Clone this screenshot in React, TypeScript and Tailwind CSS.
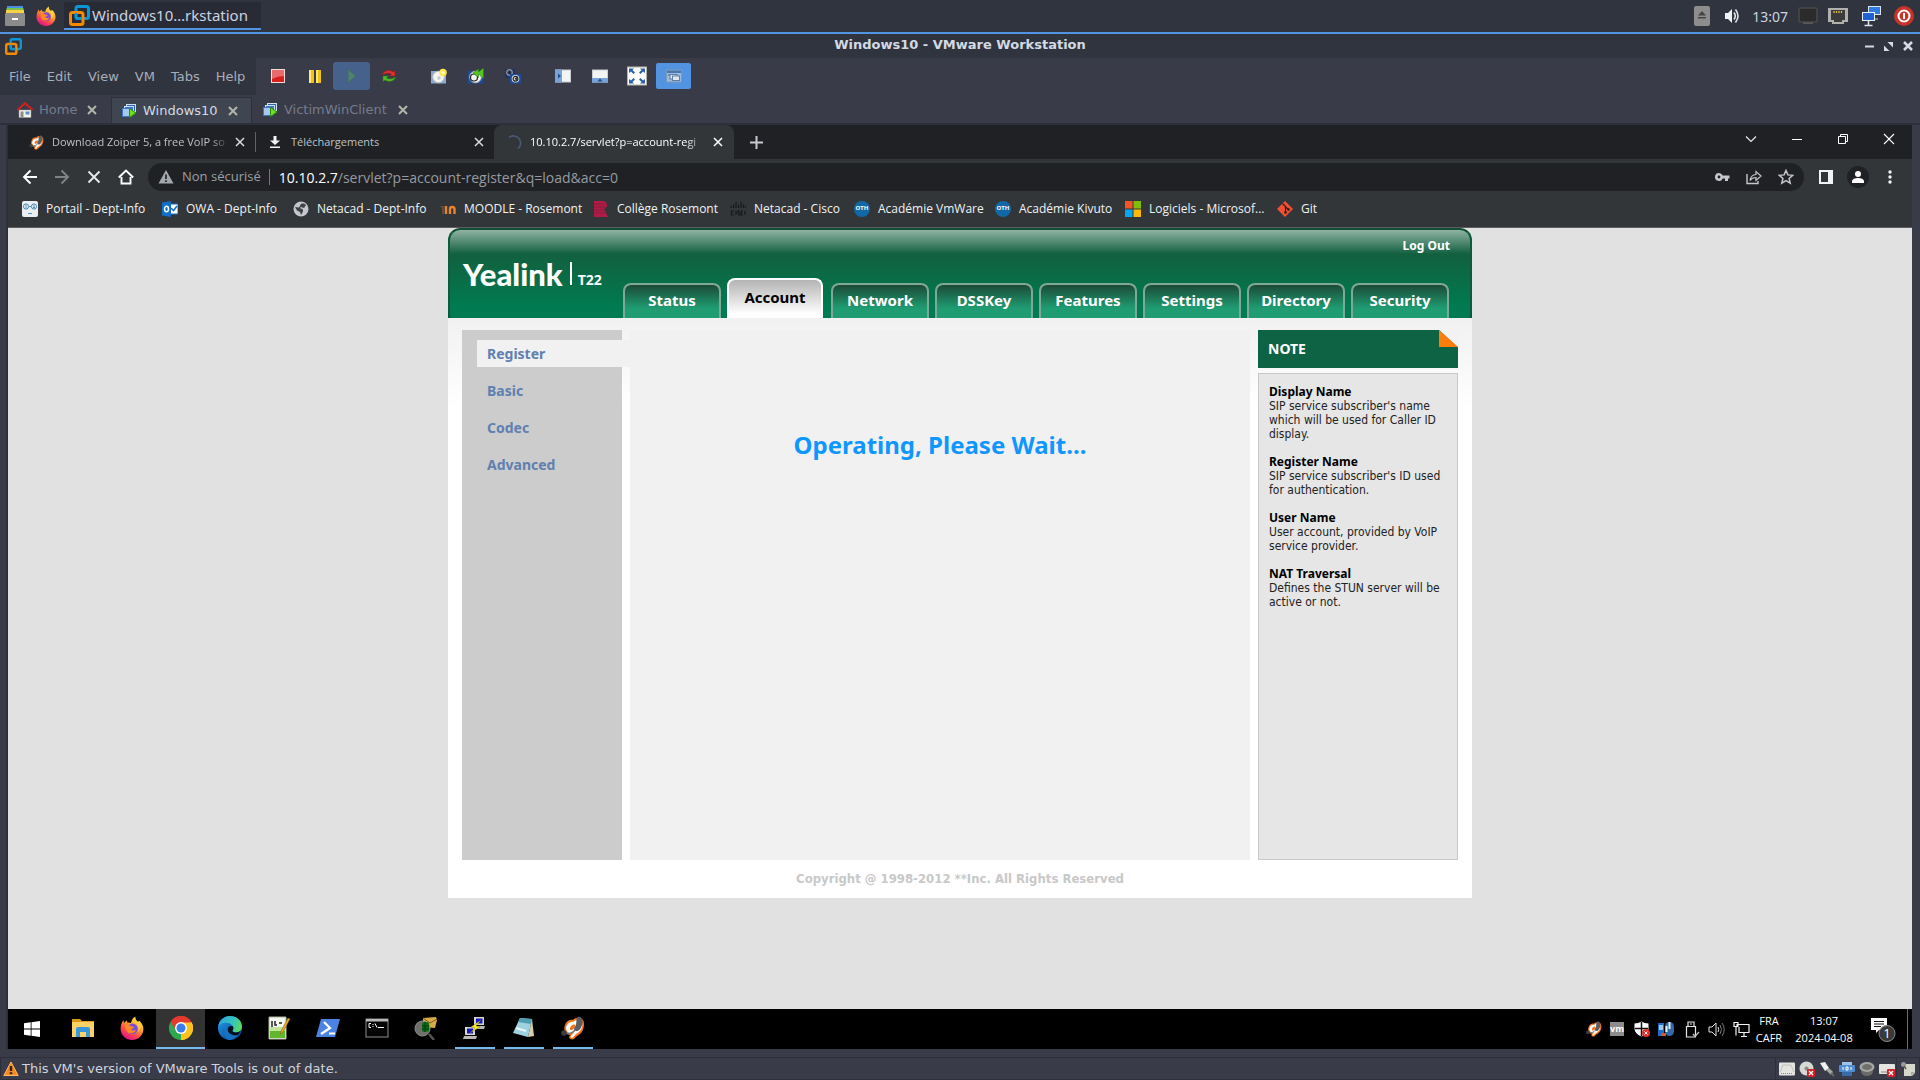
import type { ReactNode } from "react";

const ui = "font-['DejaVu_Sans',sans-serif]";
const chromeFont = "font-['Open_Sans','Noto_Sans',sans-serif]";

/* ---------- drawings ---------- */

function Svg({ size = 16, box = 16, className = "", children }: { size?: number; box?: number; className?: string; children: ReactNode }) {
  return (
    <svg width={size} height={size} viewBox={`0 0 ${box} ${box}`} className={`shrink-0 ${className}`} aria-hidden="true" fill="none">
      {children}
    </svg>
  );
}

const VmwareLogo = ({ size }: { size: number }) => (
  <Svg size={size} box={21}>
    <rect x="7" y="1.5" width="12.5" height="12" rx="2" stroke="#0f95d4" strokeWidth="3" />
    <rect x="1.5" y="7.5" width="12.5" height="12" rx="2" stroke="#f38b00" strokeWidth="3" />
    <path d="M7 8v4.500q0 1 1 1h5" stroke="#0f95d4" strokeWidth="2.500" />
  </Svg>
);

const Firefox = ({ size }: { size: number }) => (
  <Svg size={size} box={24}>
    <defs>
      <linearGradient id="ffBody" x1="18" y1="2" x2="6" y2="22" gradientUnits="userSpaceOnUse">
        <stop stopColor="#ffe847" />
        <stop offset=".4" stopColor="#ff9d2c" />
        <stop offset=".7" stopColor="#ff4a4b" />
        <stop offset="1" stopColor="#e31587" />
      </linearGradient>
    </defs>
    <path d="M15.500.5c-.6 2.300.8 3.700 2.300 5.200l1.600-1c2.600 2.400 4 5.400 4 8.300C23.400 19.200 18.200 24 12 24S.600 19.200.600 13c0-3.300 1-6.500 2.800-8.700l.7 2.700C5 5.600 6 4.800 7 4.400l.4 2.300c1.200-.3 2.500 0 3.600.4C11.500 4.300 13 1.500 15.500.5z" fill="url(#ffBody)" />
    <circle cx="12.500" cy="12.800" r="5.200" fill="#7a4be0" />
    <path d="M5.500 9.500c2-1.200 4-.8 5.500.8l3 .6c-.4 1.400-1.500 1.800-3 2 .8 1.800 3.200 2 5 .8-.8 2.600-3.200 4.200-6 3.600-3.200-.7-5-4-4.500-7.800z" fill="#ff8a24" />
    <path d="M15.500 7c3 1.500 4 5 2.500 8.500 3-2 3.500-6 1-9.500z" fill="#ffd43a" />
  </Svg>
);

const Chrome = () => (
  <Svg size={24} box={48}>
    <path d="M24 24 3.200 12A24 24 0 0 1 44.800 12z" fill="#e33b2e" />
    <path d="M24 24 44.800 12A24 24 0 0 1 24 48z" fill="#fcc31e" />
    <path d="M24 24v24A24 24 0 0 1 3.200 12z" fill="#2da94f" />
    <path d="M24 13h21.200A24 24 0 0 0 3.200 12l11.300 17.500z" fill="#e33b2e" />
    <path d="M33.500 29.500 23 48A24 24 0 0 0 45.300 13H24z" fill="#fcc31e" />
    <circle cx="24" cy="24" r="12" fill="#fff" />
    <circle cx="24" cy="24" r="9" fill="#3b7ded" />
  </Svg>
);

const Edge = () => (
  <Svg size={24} box={24}>
    <defs>
      <linearGradient id="edgeA" x1="2" y1="6" x2="23" y2="12" gradientUnits="userSpaceOnUse">
        <stop stopColor="#2ea9df" />
        <stop offset=".6" stopColor="#33c7b8" />
        <stop offset="1" stopColor="#62d956" />
      </linearGradient>
      <linearGradient id="edgeB" x1="0" y1="10" x2="14" y2="24" gradientUnits="userSpaceOnUse">
        <stop stopColor="#1b8ad8" />
        <stop offset="1" stopColor="#0c4a9a" />
      </linearGradient>
    </defs>
    <circle cx="12" cy="12" r="12" fill="url(#edgeB)" />
    <path d="M.3 10.500C1.200 4.500 6 0 12 0c7 0 12 5 12 10.500 0 3.500-2.500 6-6 6-2.500 0-4.200-1-3.400-2.200 1-1.300 1-2.700.2-4C13 7 9 6.300 5.500 7 3 7.500 1 9 .3 10.500z" fill="url(#edgeA)" />
    <path d="M14.800 10.300c.8 1.300.8 2.700-.2 4-.8 1.200.9 2.200 3.400 2.200 1.700 0 3.300-.6 4.300-1.700-.6 1.800-1.400 3-2.400 4.200-4 1.500-10-.5-10.400-5.500-.1-2.600 2.300-4.500 5.300-3.200z" fill="#02101f" />
    <path d="M9.500 13.500C10 18.500 16 20.500 19.900 19c-2 2.700-5.500 4.600-8.500 4.900-4-1.200-6-5-5-8.500.7-2.600 3-4.800 5.500-5.200-1.500.6-2.300 1.800-2.400 3.300z" fill="#1572c4" />
  </Svg>
);

const Zoiper = ({ size }: { size: number }) => (
  <Svg size={size} box={24}>
    <path d="M4 9C5 5 9 3 12 4c2-3 8-3 10 0s1 10-2 13-5 3-7 6c-2 1-5 0-5-2 0-1 1-2 2-2-3 0-5-1-6-3s-1-5 0-7z" fill="#f6731c" />
    <path d="M5.500 10c1-3 4-4.500 7-4.200C14 3.500 19 3 20.500 6s.5 7-2 9.500-5 3-6.500 6c-1 .8-2.500.3-2.500-.8 0-1 2-2.500 3.500-3.500-3.500.5-6-.2-7-2s-1.300-3.200-.5-5.200z" fill="#fff" />
    <path d="M9 12c1-3 3-4 4.500-3.500s.5 3-1 4.500-4 2-3.500-1z" fill="#f6731c" />
    <path d="M17 1c3-1 5 2 4.500 6S18 16 15 15s-2-3-.500-5 0-8 2.500-9z" fill="#5b5e62" />
    <path d="M14 14c-2 3-6 4-10 3" stroke="#77797c" strokeWidth="1.500" />
    <circle cx="3" cy="17" r="2.800" fill="#3c3e42" />
  </Svg>
);

const VmTabIcon = () => (
  <Svg>
    <rect x="5.500" y="1.500" width="9" height="7" fill="#2c63ae" stroke="#cfe0f5" />
    <rect x="3.500" y="3.500" width="9" height="7" fill="#3f78c2" stroke="#cfe0f5" />
    <rect x="1.500" y="5.500" width="9" height="8" fill="#a9c8ee" stroke="#3f78c2" />
    <path d="M8.500 5.500v9l6.500-4.500z" fill="#6ee01d" stroke="#2e8b13" />
  </Svg>
);

const X = ({ size, color, sw = 2 }: { size: number; color: string; sw?: number }) => (
  <Svg size={size} box={10}>
    <path d="m1 1 8 8M9 1 1 9" stroke={color} strokeWidth={sw} />
  </Svg>
);

const Snapshot = ({ kind }: { kind: "take" | "revert" | "manage" }) => (
  <Svg>
    {kind === "manage" ? (
      <>
        <path d="M0 1h10v5H6v4H0z" fill="#24345c" />
        <circle cx="4.500" cy="4.500" r="2.800" fill="#39415a" stroke="#8d97ab" strokeWidth="1.200" />
        <circle cx="4.500" cy="4.500" r="1" fill="#101522" />
        <rect x="5" y="6" width="11" height="9.500" fill="#1f4c97" />
        <circle cx="10.500" cy="10.800" r="3.800" fill="#e9eef5" />
        <circle cx="10.500" cy="10.800" r="2.400" stroke="#222" strokeWidth="1.200" />
        <path d="M11.800 9v3.600L9.500 10.800z" fill="#111" />
      </>
    ) : (
      <>
        <rect x="0" y="3" width="15" height="12.500" fill={kind === "take" ? "#8aa9d0" : "#1f4c97"} />
        <circle cx="7.500" cy="9" r="5.800" fill="#f4f4f1" stroke="#b8b8b8" />
        {kind === "take" ? (
          <>
            <circle cx="8" cy="10" r="1.800" fill="#c9c9c4" />
            <circle cx="12" cy="4.500" r="3.800" fill="#ffe747" />
            <circle cx="12" cy="4.500" r="1.600" fill="#fffbd0" />
          </>
        ) : (
          <>
            <circle cx="6" cy="9.500" r="3.500" stroke="#222" strokeWidth="1.200" />
            <path d="M10.500 1v3L15.500 0v10.500l-5-4.500v3.500L5 5z" fill="#57c425" stroke="#2c7c12" strokeWidth=".6" />
          </>
        )}
      </>
    )}
  </Svg>
);

const Badge = ({ at = 10 }: { at?: number }) => (
  <>
    <rect x={at - 2} y="8" width="8" height="8" rx="1" fill="#d21f26" />
    <path d={`m${at} 10 4 4m0-4-4 4`} stroke="#fff" strokeWidth="1.400" />
  </>
);

/* ---------- host panel ---------- */

function HostPanel() {
  return (
    <header className="flex h-[34px] shrink-0 items-center border-b-2 border-[#5294e2] bg-[#2f343f] pr-[6px] pl-[5px] font-['Noto_Sans',sans-serif] text-[#cdd3e0]">
      <button aria-label="Files" className="mr-[11px]">
        <Svg size={20} box={20}>
          <path d="M2 0h16v3H2z" fill="#4a90e2" />
          <path d="M1.500 2h17v3h-17z" fill="#7cc04b" />
          <path d="M1 4h18v4H1z" fill="#f6d24a" />
          <rect y="7" width="20" height="13" rx="1" fill="#8b8b8b" />
          <path d="M7 12h6v2H7z" fill="#fff" />
        </Svg>
      </button>
      <button aria-label="Firefox" className="mr-2">
        <Firefox size={20} />
      </button>
      <button className="flex h-7 w-[197px] items-center border-b-2 border-[#5294e2] bg-[#282b35] pl-[5px] text-[15px]">
        <VmwareLogo size={21} />
        <span className="ml-0.5 whitespace-nowrap">Windows10…rkstation</span>
      </button>
      <div className="ml-auto flex items-center">
        <Svg size={20} box={20} className="mr-3">
          <rect x="2" width="16" height="20" rx="2" fill="#8d8d8d" />
          <path d="M6 9.500 10 5l4 4.500zM6 11h8v1.500H6z" fill="#454545" />
        </Svg>
        <Svg size={16} className="mr-3">
          <path d="M1 5h3l4-4v14l-4-4H1z" fill="#f0f2f6" />
          <path d="M10 4.500q2.500 3.500 0 7M11.500 1.500q5 6.500 0 13" stroke="#dfe3ea" strokeWidth="1.600" />
        </Svg>
        <time className="mr-[10px] text-[14px]">13:07</time>
        <Svg size={20} box={20} className="mr-[10px]">
          <rect x="1" y="2" width="18" height="14" rx="1" fill="#2b2b2b" stroke="#4a4a4a" strokeWidth="1.500" />
          <path d="M5 16.500h10V18H5z" fill="#5b5b5b" />
        </Svg>
        <Svg size={20} box={20} className="mr-3">
          <path d="M0 2h20v14h-4v2H4v-2H0z" fill="#b0b0ac" />
          <path d="M3 4h14v10h-3v2H6v-2H3z" fill="#3b3b3b" />
          <path d="M6 5v2M8.500 5v2M11 5v2M13.500 5v2" stroke="#e6bd36" strokeWidth="1.300" />
        </Svg>
        <Svg size={22} box={22} className="mr-3">
          <rect x="8.500" y="1.500" width="12" height="8" fill="#2f7be0" stroke="#dbe4ee" />
          <path d="M14 10v3m-3 1h7" stroke="#c9ced6" />
          <rect x="2.500" y="7.500" width="12" height="8" fill="#1f62cf" stroke="#e8eef5" />
          <path d="M8.500 16v4m-4 .500h8" stroke="#dfe3e8" strokeWidth="1.500" />
        </Svg>
        <Svg size={20} box={20}>
          <circle cx="10" cy="10" r="10" fill="#c8322b" />
          <circle cx="10" cy="10" r="5.500" stroke="#fff" strokeWidth="2" />
          <path d="M10 7v6" stroke="#fff" strokeWidth="2" />
        </Svg>
      </div>
    </header>
  );
}

function TitleBar() {
  return (
    <div className="grid h-6 shrink-0 grid-cols-[1fr_auto_1fr] items-center bg-[#2f343f] px-[5px]">
      <VmwareLogo size={17} />
      <h1 className="pb-0.5 text-[13px] font-bold text-[#d3dae3]">Windows10 - VMware Workstation</h1>
      <div className="flex items-center gap-[10px] justify-self-end pr-0.5">
        <button aria-label="Minimize"><Svg size={9} box={9}><path d="M0 4.500h9" stroke="#d3dae3" strokeWidth="2" /></Svg></button>
        <button aria-label="Restore"><Svg size={9} box={9}><path d="M3.500 0H9v5.500zM0 3.500V9h5.500z" fill="#d3dae3" /></Svg></button>
        <button aria-label="Close"><X size={10} color="#d3dae3" sw={2.500} /></button>
      </div>
    </div>
  );
}

function ToolButton({ label, tone = "", children }: { label: string; tone?: string; children: ReactNode }) {
  return (
    <button aria-label={label} className={`flex h-7 w-[37px] items-center justify-center rounded-[3px] ${tone}`}>
      {children}
    </button>
  );
}

function MenuBar() {
  return (
    <div className="flex h-[37px] shrink-0 items-stretch bg-[#393b49]">
      <nav className="flex w-64 items-center gap-4 bg-[#2f343f] pl-[9px] text-[13px] text-[#a9aeba]">
        {["File", "Edit", "View", "VM", "Tabs", "Help"].map((m) => (
          <button key={m}>{m}</button>
        ))}
      </nav>
      <div className="ml-[3px] flex items-center gap-[13px] pb-0.5">
        <div className="flex">
          <ToolButton label="Power off"><Svg><rect x="1.500" y="1.500" width="13" height="13" fill="#d81e1e" stroke="#f6dcdc" /><path d="M2 2h12v6q-6 0-12 3z" fill="#e86a6a" /></Svg></ToolButton>
          <ToolButton label="Suspend"><Svg><path d="M2 2h5v13H2zM9 2h5v13H9z" fill="#f1c40f" /><path d="M2 2h2v13H2zM9 2h2v13H9z" fill="#ffe680" /></Svg></ToolButton>
          <ToolButton label="Power on" tone="bg-[#45618c]"><Svg><path d="M4 1.500v13L12 8z" fill="#4f8270" stroke="#3f7060" /></Svg></ToolButton>
          <ToolButton label="Reset">
            <Svg>
              <path d="M1.500 7C2 3 8 1 12 4l2-1.500V8H8.500l2-2C8 4.500 4.500 5 1.500 7z" fill="#e13131" stroke="#8e1515" strokeWidth=".5" />
              <path d="M14.500 9c-.5 4-6.500 6-10.500 3l-2 1.500V8h5.500l-2 2c2.500 1.500 6 1 9-1z" fill="#52b82a" stroke="#2a7312" strokeWidth=".5" />
            </Svg>
          </ToolButton>
        </div>
        <div className="flex">
          <ToolButton label="Take snapshot"><Snapshot kind="take" /></ToolButton>
          <ToolButton label="Revert snapshot"><Snapshot kind="revert" /></ToolButton>
          <ToolButton label="Manage snapshots"><Snapshot kind="manage" /></ToolButton>
        </div>
        <div className="flex">
          <ToolButton label="Show library"><Svg><rect x=".5" y="2" width="15" height="12" fill="#f4f4f2" stroke="#c8ccd3" /><path d="M0 1.500h7v13H0z" fill="#78a3d8" /><path d="M3 5.500v5L6 8z" fill="#234c8c" /></Svg></ToolButton>
          <ToolButton label="Show thumbnails"><Svg><rect x=".5" y="2" width="15" height="12" fill="#f4f4f2" stroke="#c8ccd3" /><path d="M0 10h16v4.500H0z" fill="#78a3d8" /><path d="m5.500 13.500 2.500-3 2.500 3z" fill="#234c8c" /></Svg></ToolButton>
          <ToolButton label="Full screen">
            <Svg size={20} box={20}>
              <rect x=".5" y="1" width="19" height="18" fill="#fbfbf8" stroke="#b5b5a8" />
              <path d="M2 2.500h5L5.500 4 8 6.500 6.500 8 4 5.500l-2 1.500zM18 2.500h-5L14.500 4 12 6.500 13.500 8 16 5.500l2 1.500zM2 17.500h5L5.500 16 8 13.500 6.500 12 4 14.500 2 13zM18 17.500h-5l1.500-1.500-2.500-2.500 1.500-1.500 2.500 2.500L18 13z" fill="#2e5fa8" />
            </Svg>
          </ToolButton>
          <ToolButton label="Unity mode" tone="bg-[#5294e2] border border-[#393b49]">
            <Svg>
              <rect x=".5" y="2" width="15" height="12" fill="#9dbbe0" stroke="#7b97b8" />
              <path d="M1 2.500h14V5H1z" fill="#4876ae" />
              <path d="M2 7h3" stroke="#3f6390" />
              <rect x="4" y="6.500" width="7" height="4.500" fill="#dfe8f2" stroke="#5e7ea4" />
              <rect x="6.500" y="8" width="7" height="4.500" fill="#dfe8f2" stroke="#5e7ea4" />
            </Svg>
          </ToolButton>
        </div>
      </div>
    </div>
  );
}

function VmTabs() {
  return (
    <div role="tablist" className="flex h-[30px] shrink-0 items-stretch border-b-2 border-[#2d303b] bg-[#393b49] pt-0.5 pl-[6px] text-[13px] text-[#757b8b]">
      <div role="tab" className="flex w-[105px] items-center pl-[11px]">
        <Svg>
          <path d="M2 8h12v7.500H2z" fill="#f3f3ef" stroke="#9a9a90" strokeWidth=".5" />
          <path d="M.5 8 8 1.200 15.500 8" stroke="#d22020" strokeWidth="2" />
          <path d="M3.500 9.500h3v6h-3z" fill="#8b8d85" />
          <path d="M8.500 9.500h4v3h-4z" fill="#5f8fc8" />
        </Svg>
        <span className="ml-[6px]">Home</span>
        <button aria-label="Close Home" className="ml-[10px]"><X size={10} color="#b3b5ab" /></button>
      </div>
      <div role="tab" aria-selected="true" className="flex w-[141px] items-center border border-b-0 border-[#2d303b] bg-[#404552] pl-[9px] text-[#d3dae3]">
        <VmTabIcon />
        <span className="ml-[6px]">Windows10</span>
        <button aria-label="Close Windows10" className="ml-[10px]"><X size={10} color="#b3b5ab" /></button>
      </div>
      <div role="tab" className="flex items-center pl-[10px]">
        <VmTabIcon />
        <span className="ml-[6px]">VictimWinClient</span>
        <button aria-label="Close VictimWinClient" className="ml-[11px]"><X size={10} color="#b3b5ab" /></button>
      </div>
    </div>
  );
}

/* ---------- browser ---------- */

function ChromeTabs() {
  return (
    <div className="flex h-[34px] shrink-0 items-stretch bg-[#202124] text-[11px] text-[#bdc1c6]">
      <div role="tab" className="flex w-[247px] items-center pl-[21px]">
        <Zoiper size={15} />
        <span className="ml-2 w-[177px] whitespace-nowrap [mask-image:linear-gradient(to_right,black_90%,transparent)]">Download Zoiper 5, a free VoIP so</span>
        <button aria-label="Close tab" className="ml-[6px]"><X size={10} color="#dadce0" sw={1.500} /></button>
      </div>
      <div className="h-5 w-px self-center bg-[#5f6368]" />
      <div role="tab" className="flex w-[238px] items-center pr-[10px] pl-[13px]">
        <Svg size={12} box={12}><path d="M4.500 0h3v4.500H11L6 9 1 4.500h3.500zM1 10.500h10V12H1z" fill="#f1f3f4" /></Svg>
        <span className="ml-[10px]">Téléchargements</span>
        <button aria-label="Close tab" className="ml-auto"><X size={10} color="#dadce0" sw={1.500} /></button>
      </div>
      <div role="tab" aria-selected="true" className="flex w-60 items-center rounded-t-lg bg-[#323639] pl-[13px] text-white">
        <Svg size={15} box={15}><path d="M2 2.500A7 7 0 1 1 11 13.500" stroke="#4a5a78" strokeWidth="1.600" /></Svg>
        <span className="ml-2 w-[177px] whitespace-nowrap [mask-image:linear-gradient(to_right,black_88%,transparent)]">10.10.2.7/servlet?p=account-regi</span>
        <button aria-label="Close tab" className="ml-[6px]"><X size={10} color="#fff" sw={1.500} /></button>
      </div>
      <button aria-label="New tab" className="ml-4">
        <Svg size={13} box={13}><path d="M6.500 0v13M0 6.500h13" stroke="#c8cbcf" strokeWidth="2" /></Svg>
      </button>
      <div className="ml-auto flex pb-[6px]">
        <button aria-label="Search tabs" className="flex w-[46px] items-center justify-center"><Svg size={12} box={12}><path d="m1 3.500 5 5 5-5" stroke="#e8eaed" strokeWidth="1.200" /></Svg></button>
        <button aria-label="Minimize" className="flex w-[46px] items-center justify-center"><Svg size={12} box={12}><path d="M1 6.500h10" stroke="#fff" /></Svg></button>
        <button aria-label="Restore" className="flex w-[46px] items-center justify-center"><Svg size={12} box={12}><path d="M1.500 3.500h7v7h-7zM3.500 3V1.500h7v7H9" stroke="#fff" /></Svg></button>
        <button aria-label="Close" className="flex w-[46px] items-center justify-center"><Svg size={12} box={12}><path d="m1 1 10 10M11 1 1 11" stroke="#fff" strokeWidth="1.100" /></Svg></button>
      </div>
    </div>
  );
}

function NavButton({ label, children }: { label: string; children: ReactNode }) {
  return <button aria-label={label} className="flex w-8 items-center justify-center">{children}</button>;
}

function AddressRow() {
  return (
    <div className="flex h-9 shrink-0 items-center bg-[#323639] px-[6px]">
      <NavButton label="Back"><Svg><path d="M15 8H2.500M8.500 1.500 2 8l6.500 6.500" stroke="#fff" strokeWidth="1.900" /></Svg></NavButton>
      <NavButton label="Forward"><Svg><path d="M1 8h12.500M7.500 1.500 14 8l-6.500 6.500" stroke="#7f8386" strokeWidth="1.900" /></Svg></NavButton>
      <NavButton label="Stop"><Svg><path d="m2.500 2.500 11 11m0-11-11 11" stroke="#e8eaed" strokeWidth="1.900" /></Svg></NavButton>
      <NavButton label="Home"><Svg><path d="M3.500 8v6.500h9V8M.8 8.500 8 1.500l7.200 7" stroke="#fff" strokeWidth="1.900" /></Svg></NavButton>
      <div className="ml-[6px] flex h-7 min-w-0 flex-1 items-center rounded-full bg-[#202124] px-[10px]">
        <Svg><path d="M8 1 .5 14.500h15z" fill="#a3a8ad" /><path d="M8 5.500v4.500m0 1.200v1.800" stroke="#202124" strokeWidth="1.700" /></Svg>
        <span className="ml-2 text-[13px] whitespace-nowrap text-[#9aa0a6]">Non sécurisé</span>
        <span className="mx-2 h-4 w-px bg-[#73777b]" />
        <p className="ml-px min-w-0 flex-1 truncate text-[14px] text-[#969ba1]"><span className="text-white">10.10.2.7</span>/servlet?p=account-register&amp;q=load&amp;acc=0</p>
        <div className="flex gap-4">
          <button aria-label="Passwords"><Svg><path d="M5 4a4 4 0 1 0 3.700 5.500H11V12h3V9.500h1.500v-3H8.700A4 4 0 0 0 5 4zm0 2.600a1.400 1.400 0 1 1 0 2.800 1.400 1.400 0 0 1 0-2.800z" fill="#c4c7cb" fillRule="evenodd" /></Svg></button>
          <button aria-label="Share"><Svg><path d="M1 5v9.500h11V12" stroke="#c4c7cb" strokeWidth="1.400" /><path d="M4 11.500C4.500 7.500 7 5.800 10 5.500V2.500L15 7l-5 4.500v-3c-2.500 0-4.500.8-6 3z" stroke="#c4c7cb" strokeWidth="1.200" /></Svg></button>
          <button aria-label="Bookmark"><Svg><path d="m8 1.500 1.900 4.400 4.800.4-3.600 3.200 1.100 4.700L8 11.700l-4.200 2.500 1.100-4.700-3.600-3.200 4.800-.4z" stroke="#c4c7cb" strokeWidth="1.500" /></Svg></button>
        </div>
      </div>
      <div className="ml-[6px] flex">
        <NavButton label="Side panel"><Svg><rect x="2" y="2" width="12" height="12" stroke="#f1f3f4" strokeWidth="2" /><path d="M10 2h4v12h-4z" fill="#f1f3f4" /></Svg></NavButton>
        <NavButton label="Profile"><span className="flex size-[22px] items-center justify-center rounded-full bg-[#202124]"><Svg size={14} box={14}><circle cx="7" cy="4" r="3" fill="#fff" /><path d="M1 13v-1.500C1 9 4 8 7 8s6 1 6 3.500V13z" fill="#fff" /></Svg></span></NavButton>
        <NavButton label="Menu"><Svg><circle cx="8" cy="3" r="1.700" fill="#f1f3f4" /><circle cx="8" cy="8" r="1.700" fill="#f1f3f4" /><circle cx="8" cy="13" r="1.700" fill="#f1f3f4" /></Svg></NavButton>
      </div>
    </div>
  );
}

const Oth = () => (
  <span className="flex size-4 shrink-0 items-center justify-center rounded-full bg-[#1268a6] text-[6px] font-bold text-white">OTH</span>
);

const bookmarks: { name: string; width: string; icon: ReactNode }[] = [
  { name: "Portail - Dept-Info", width: "w-[140px]", icon: <Svg><rect width="16" height="16" rx="2" fill="#eceff1" /><circle cx="4" cy="5.500" r="2.600" stroke="#3d86b8" /><circle cx="12" cy="5.500" r="2.600" stroke="#3d86b8" /><path d="M4 4v3m3-1.500h2M11 5h2M11 6.500h2M6 12.500h4" stroke="#5b90b5" /></Svg> },
  { name: "OWA - Dept-Info", width: "w-[131px]", icon: <Svg><path d="M7 3h9v10H7z" fill="#fff" stroke="#0f6fc6" /><path d="m9 7 2.500 2.500L15 5" stroke="#0f6fc6" strokeWidth="1.500" /><path d="M0 1.500 9 0v16l-9-1.500z" fill="#0f6fc6" /><ellipse cx="4.500" cy="8" rx="2" ry="2.700" stroke="#fff" strokeWidth="1.500" /></Svg> },
  { name: "Netacad - Dept-Info", width: "w-[147px]", icon: <Svg><circle cx="8" cy="8" r="7.500" fill="#c3c6ca" /><path d="M8 3c2-1 4 0 5 1l-2 3-3-1-1 1 3 1.500v2L8 14l-1-3-3-1.500L2 6l4 .5z" fill="#3f4347" /></Svg> },
  { name: "MOODLE - Rosemont", width: "w-[153px]", icon: <Svg><path d="M0 5h4v8H2V7z" fill="#6b4a33" /><path d="M6 5v8M10 13V8q0-2 2.200-2T14.500 8v5" stroke="#e8842b" strokeWidth="2.400" /></Svg> },
  { name: "Collège Rosemont", width: "w-[137px]", icon: <Svg><path d="M1 0h10q3 1 3 4t-3 4l4 8h-5H1z" fill="#b01c48" /><path d="M1 3h12M1 6h12M1 9h10M1 12h12" stroke="#741c38" strokeWidth=".7" /></Svg> },
  { name: "Netacad - Cisco", width: "w-[124px]", icon: <Svg><path d="M1 5v2M3.500 3.500V7M6 1v6M8.500 4v3M11 1v6M13.500 3.500V7M15.500 5v2M4 10H1.500v4H4M6 10v4M10 10H8v2h2v2H8M13 10h-1.500v4H13M15 10v4" stroke="#17181a" strokeWidth="1.200" /></Svg> },
  { name: "Académie VmWare", width: "w-[141px]", icon: <Oth /> },
  { name: "Académie Kivuto", width: "w-[130px]", icon: <Oth /> },
  { name: "Logiciels - Microsof...", width: "w-[152px]", icon: <Svg><path d="M0 0h7.500v7.500H0z" fill="#f35325" /><path d="M8.500 0H16v7.500H8.500z" fill="#81bc06" /><path d="M0 8.500h7.500V16H0z" fill="#05a6f0" /><path d="M8.500 8.500H16V16H8.500z" fill="#ffba08" /></Svg> },
  { name: "Git", width: "w-10", icon: <Svg><path d="m8 0 8 8-8 8-8-8z" fill="#f05033" /><path d="m5.500 2.500 3 3v6M8.500 6l3 2.500" stroke="#2d1a17" strokeWidth="1.200" /><circle cx="8.500" cy="11.500" r="1.300" fill="#2d1a17" /><circle cx="11.500" cy="8.500" r="1.300" fill="#2d1a17" /></Svg> },
];

function Bookmarks() {
  return (
    <nav className="flex h-[33px] shrink-0 items-center border-b border-[#5c5e61] bg-[#323639] pb-[5px] pl-[14px] text-[12px] text-[#f1f3f4]">
      {bookmarks.map((b) => (
        <a key={b.name} href="#" className={`flex shrink-0 items-center gap-2 whitespace-nowrap ${b.width}`}>
          {b.icon}
          {b.name}
        </a>
      ))}
    </nav>
  );
}

/* ---------- phone configuration page ---------- */

const tabs = ["Status", "Account", "Network", "DSSKey", "Features", "Settings", "Directory", "Security"];
const notes = [
  ["Display Name", "SIP service subscriber's name which will be used for Caller ID display."],
  ["Register Name", "SIP service subscriber's ID used for authentication."],
  ["User Name", "User account, provided by VoIP service provider."],
  ["NAT Traversal", "Defines the STUN server will be active or not."],
];

function PhonePage() {
  return (
    <main className="flex flex-1 flex-col bg-[#e1e1e1] font-['Noto_Sans',sans-serif]">
      <div className="mx-auto w-full max-w-[1024px] rounded-t-xl bg-[linear-gradient(to_bottom,#f1f1f1_90px,#fff_180px)]">
        <header className="flex h-[90px] rounded-t-xl border-t-2 border-r-2 border-l-2 border-x-[#0c5b3f] border-t-[#124d35] bg-[linear-gradient(to_bottom,#8fb3a3_0px,#12603f_24px,#007a50_76px)] pl-[13px]">
          <div className="flex h-[60px] w-[160px] items-end text-white">
            <span className="font-['Lato',sans-serif] text-[31px] leading-8 font-black">Yealink</span>
            <span className="mb-[5px] ml-[7px] h-[23px] w-0.5 bg-white" />
            <span className="ml-[6px] text-[14px] leading-5 font-bold">T22</span>
          </div>
          <div className="flex flex-1 flex-col justify-between">
            <div className="flex justify-end pt-2 pr-5">
              <a href="#" className="text-[12px] leading-4 font-bold text-white">Log Out</a>
            </div>
            <nav className="flex items-end gap-[6px]">
              {tabs.map((t) =>
                t === "Account" ? (
                  <a key={t} href="#" aria-current="page" className="mr-0.5 flex h-10 w-24 items-center justify-center rounded-t-lg border-2 border-b-0 border-white bg-[linear-gradient(to_bottom,#b4b4b4,#fff_90%)] pb-1 text-[15px] font-bold text-black">{t}</a>
                ) : (
                  <a key={t} href="#" className="flex h-[35px] w-[98px] items-center justify-center rounded-t-lg border-2 border-b-0 border-[#7fa898] bg-[linear-gradient(to_bottom,#1c4a37,#1f9c72_70%)] pb-0.5 text-[15px] font-bold text-white">{t}</a>
                ),
              )}
            </nav>
          </div>
        </header>
        <div className="flex h-[542px] px-[14px] pt-3">
          <nav className="flex w-[168px] shrink-0 flex-col gap-[10px] bg-[linear-gradient(to_right,#ccc_160px,transparent_160px)] pt-[10px] pl-[15px] text-[14px] font-bold text-[#5f80b0]">
            {["Register", "Basic", "Codec", "Advanced"].map((s) => (
              <a key={s} href="#" className={`flex h-[27px] items-center pl-[10px] ${s === "Register" ? "bg-[#f1f1f1]" : ""}`}>{s}</a>
            ))}
          </nav>
          <section className="flex-1 bg-[#f1f1f1] pt-[99px] text-center">
            <p role="status" className="text-[24px] leading-8 font-bold text-[#0f97ff]">Operating, Please Wait...</p>
          </section>
          <aside className="ml-2 flex w-[200px] flex-col gap-[5px]">
            <h2 className="flex h-[38px] items-center justify-between bg-[#0d6343] pl-[10px] text-[14px] leading-4 font-bold text-white">
              NOTE
              <Svg size={19} box={19} className="self-start">
                <path d="M0 0h19v17.500z" fill="#f2f2f2" />
                <path d="M0 0v17h19z" fill="#ff7d0a" />
              </Svg>
            </h2>
            <div className="flex flex-1 flex-col gap-[14px] border border-[#c8c8c8] bg-[#e6e6e6] py-[11px] pr-3 pl-[10px] text-[12px] leading-[14px] text-[#222]">
              {notes.map(([h, b]) => (
                <div key={h}>
                  <h3 className="font-bold text-black">{h}</h3>
                  <p className="font-['DejaVu_Sans_Condensed','DejaVu_Sans',sans-serif]">{b}</p>
                </div>
              ))}
            </div>
          </aside>
        </div>
        <footer className="pt-[11px] pb-[11px] text-center font-['DejaVu_Sans_Condensed','DejaVu_Sans',sans-serif] text-[13px] leading-4 font-bold text-[#c8c8c8]">Copyright @ 1998-2012 **Inc. All Rights Reserved</footer>
      </div>
    </main>
  );
}

/* ---------- guest taskbar ---------- */

const apps: { name: string; icon: ReactNode; state?: "active" | "open" }[] = [
  { name: "File Explorer", icon: <Svg size={22} box={22}><path d="M0 2h8l2 2h12v5H0z" fill="#d99a18" /><path d="M0 5h22v15H0z" fill="#fbd266" /><path d="M4 20v-8q0-2 2-2h10q2 0 2 2v8h-4v-5H8v5z" fill="#3a96dd" /></Svg> },
  { name: "Firefox", icon: <Firefox size={24} /> },
  { name: "Chrome", icon: <Chrome />, state: "active" },
  { name: "Edge", icon: <Edge /> },
  { name: "Notepad++", icon: <Svg size={24} box={24}><path d="M2 1h17v22H2z" fill="#f4f6f0" stroke="#aab49a" /><path d="M3 13h15v9H3z" fill="#62b52d" /><path d="M3 11h15v4H3z" fill="#bfe59a" /><path d="M5 5v6M8 5v4h2M12 7h3" stroke="#222" strokeWidth="1.500" /><path d="m21 2 2 1-7 13-2.500 2 .5-3z" fill="#e8a52a" stroke="#8a5a10" strokeWidth=".5" /></Svg> },
  { name: "PowerShell", icon: <Svg size={24} box={24}><path d="M5 3h19l-5 18H0z" fill="#4a84e0" /><path d="m8 6 6 6-9 6M13 17.500h6" stroke="#fff" strokeWidth="2.200" /></Svg> },
  { name: "Command Prompt", icon: <Svg size={24} box={24}><rect x="1" y="3" width="22" height="18" fill="#050505" stroke="#8e8e8e" /><path d="M1 3h22v2.500H1z" fill="#b9b9b9" /><path d="M6 7.500H4v4h2M8 8v1m0 1v1M10 7.500l2 4M13 11.500h6" stroke="#fff" /></Svg> },
  { name: "Wireshark", icon: <Svg size={24} box={24}><path d="m9 2 13-1 1 3-2 8-12-1z" fill="#d8ab4a" /><path d="m9 2 7 5 7-4" stroke="#7d5d1b" /><circle cx="8.500" cy="12.500" r="7.500" fill="#6d706b" stroke="#8b8e88" /><path d="M8 7q5-2 7 0v8q-5 2-7 0z" fill="#0c6c18" /><path d="M8 10h7M8 13h7M11 6v10" stroke="#043c08" /><path d="m15 18 5 6" stroke="#55524d" strokeWidth="2.500" /></Svg> },
  { name: "PuTTY", state: "open", icon: <Svg size={24} box={24}><rect x="11" y="1" width="10" height="8" fill="#d6d6ce" /><rect x="13" y="2.500" width="6.500" height="5" fill="#1414c8" /><path d="M11 10h11l-1 3H10z" fill="#b8b8b0" /><rect x="2" y="11" width="10" height="8" fill="#d6d6ce" /><rect x="4" y="12.500" width="6" height="5" fill="#1414c8" /><path d="M1 20h13l-1 3H0z" fill="#b8b8b0" /><path d="M18 4 8 11l4 1-5 5 10-6-4-1z" fill="#f8ef1d" stroke="#6d680b" strokeWidth=".4" /></Svg> },
  { name: "Notepad", state: "open", icon: <Svg size={24} box={24}><path d="m8 2 12 1-4 18L1 17z" fill="#9ed2de" /><path d="m8 2 12 1-1 5L6 6z" fill="#4f9db0" /><path d="m20 3 2 17-6 1z" fill="#d7cfae" /><path d="m4 12 10 3" stroke="#e8f7fa" strokeWidth="2" /></Svg> },
  { name: "Zoiper", state: "open", icon: <Zoiper size={24} /> },
];

function Taskbar() {
  return (
    <footer className="flex h-10 shrink-0 items-stretch bg-black text-white">
      <button aria-label="Start" className="flex w-[50px] items-center pl-4">
        <Svg><path d="M0 2.200 6.700 1.300v6.300H0zM7.500 1.200 16 0v7.600H7.500zM0 8.400h6.700v6.300L0 13.800zM7.500 8.400H16V16l-8.500-1.200z" fill="#fff" /></Svg>
      </button>
      {apps.map((a) => (
        <button key={a.name} aria-label={a.name} className={`flex w-[49px] flex-col items-center justify-between ${a.state === "active" ? "bg-[#333]" : ""}`}>
          <span className="flex h-[38px] items-center">{a.icon}</span>
          {a.state && <span className={`h-0.5 bg-[#76b9ed] ${a.state === "active" ? "w-full" : "w-10"}`} />}
        </button>
      ))}
      <div className="ml-auto flex items-center">
        <div className="flex items-center gap-2">
          <Zoiper size={16} />
          <span className="flex size-[14px] items-center justify-center bg-[#8c8c8c] text-[9px] leading-3 font-bold">vm</span>
          <Svg className="ml-0.5"><path d="M7.500.5q3 2 7 2v5q0 5-7 8-7-3-7-8v-5q4 0 7-2z" fill="#fff" /><path d="M7.500 1v14M1 7.500h13" stroke="#111" strokeWidth="1.500" /><circle cx="12" cy="12" r="4" fill="#e0302c" /><path d="m10.500 10.500 3 3m0-3-3 3" stroke="#fff" /></Svg>
          <Svg size={17} box={17}><path d="M0 2h6v13H0z" fill="#1f6fc8" /><path d="M1 4h4v5H1z" fill="#9fc7ee" /><path d="M3 12h5v3H3z" fill="#d55a2a" /><rect x="7" y="1" width="9" height="14" rx="4.500" fill="#3568a8" /><path d="M11.500 1v7M8.500 5v6" stroke="#dff0ff" strokeWidth="2" /></Svg>
          <Svg size={17} box={17}><path d="M5 5.500V1h6v4.500M3.500 5.500h9V16h-9z" stroke="#e6e6e6" strokeWidth="1.200" /><path d="M7 3h2" stroke="#e6e6e6" /><path d="m10 13 2 2.500 4-4.500" stroke="#bbb" strokeWidth="1.400" /></Svg>
          <Svg size={17} box={17}><path d="M1 6h3l4-4v13l-4-4H1z" stroke="#e6e6e6" /><path d="M10 6q1.500 2.500 0 5" stroke="#e6e6e6" /><path d="M12 4q3 4.500 0 9M14 2q4.500 6.500 0 13" stroke="#7d7d7d" /></Svg>
          <Svg size={17} box={17}><path d="M4 5V3.500h12v8H6V6M11 12v3.500M8 15.500h6M1 1.500h4v4H1zM3 5.500v9" stroke="#f0f0f0" strokeWidth="1.200" /></Svg>
        </div>
        <div className="mr-1 ml-[3px] w-8 text-center text-[11px] leading-[17px]">FRA<br />CAFR</div>
        <time className="ml-0.5 w-[66px] text-center text-[11px] leading-[17px]">13:07<br />2024-04-08</time>
        <button aria-label="Notifications" className="ml-[13px] flex">
          <Svg size={26} box={26}>
            <path d="M1 2h16v12H9l-3 3v-3H1z" fill="#fff" />
            <path d="M4 5.500h10M4 8h10M4 10.500h7" stroke="#111" strokeWidth="1.200" />
            <circle cx="17" cy="17.500" r="8" fill="#3a3a3a" stroke="#8a8a8a" />
            <text x="17" y="22" textAnchor="middle" fontSize="13" fill="#fff">1</text>
          </Svg>
        </button>
        <span className="mr-1 ml-[11px] h-10 w-px bg-[#6c6c6c]" />
      </div>
    </footer>
  );
}

function StatusBar() {
  return (
    <footer className="flex h-[31px] shrink-0 flex-col justify-end bg-[#393b49]">
      <div className="flex h-[23px] items-center border border-[#2d303b] pl-0.5 text-[13px] text-[#cfd5df]">
        <Svg><path d="M8 1 .8 14.500h14.400z" fill="#f58a1f" stroke="#ffb765" strokeLinejoin="round" /><path d="M8 5v5" stroke="#3b2410" strokeWidth="2.500" /><path d="M8 11.200v2" stroke="#3b2410" strokeWidth="2.500" /></Svg>
        <span className="ml-[3px]">This VM's version of VMware Tools is out of date.</span>
        <div className="ml-auto flex h-full items-center gap-1 border-l border-[#2d303b] pr-px pl-[3px]">
          <Svg><rect y="1.500" width="16" height="13" rx="1" fill="#e4e4e0" /><path d="m1 11 3-7h8l3 7" stroke="#c2c2bc" /><path d="M2 12.500h12" stroke="#8a8a84" strokeDasharray="1 1" /></Svg>
          <Svg><circle cx="7.500" cy="7.500" r="7" fill="#d8d8d4" /><circle cx="7.500" cy="7.500" r="2" fill="#8d8d88" /><Badge /></Svg>
          <Svg><path d="m1 2 5-1 4 6-4 3z" fill="#f0f0ec" /><path d="m7 9 3-2 4 4-2 3z" fill="#a9a9a4" /><path d="m12 12 3 3" stroke="#666" strokeWidth="2" /></Svg>
          <Svg><path d="M3 1h10v3H3z" fill="#9fc2ea" /><rect y="4" width="16" height="7" rx="1" fill="#4f8cd0" /><path d="M3 11h10v4H3z" fill="#3a6ba8" /><path d="M4 6v3M7 6h2v3H7zM12 6v3" stroke="#fff" /></Svg>
          <Svg><ellipse cx="8" cy="10.500" rx="6" ry="4.500" fill="#6a6a68" /><ellipse cx="8" cy="6" rx="7.500" ry="5" fill="#a6a6a2" /><ellipse cx="8" cy="6" rx="5" ry="3" fill="#6f6f6c" /></Svg>
          <Svg><rect y="3" width="16" height="10" rx="1" fill="#e4e4e0" /><path d="M2 11h12" stroke="#8a8a84" /><Badge /></Svg>
        </div>
        <div className="flex h-full items-center border-l border-[#2d303b] px-[3px]">
          <Svg><path d="M4 3h11v9l-3 3H4z" fill="#d5d8cb" /><path d="M15 11h-4v4z" fill="#a8ab9e" /><circle cx="3.500" cy="3.500" r="2.500" fill="#9b9b96" /><path d="m4 5 2 3" stroke="#555" strokeWidth="1.500" /></Svg>
        </div>
      </div>
    </footer>
  );
}

export default function App() {
  return (
    <div className={`flex min-h-screen flex-col bg-[#393b49] ${ui}`}>
      <HostPanel />
      <TitleBar />
      <MenuBar />
      <VmTabs />
      <div className={`mr-2 ml-[6px] flex flex-1 flex-col border-l-2 border-[#2d303b] ${chromeFont}`}>
        <ChromeTabs />
        <AddressRow />
        <Bookmarks />
        <PhonePage />
        <Taskbar />
      </div>
      <StatusBar />
    </div>
  );
}
